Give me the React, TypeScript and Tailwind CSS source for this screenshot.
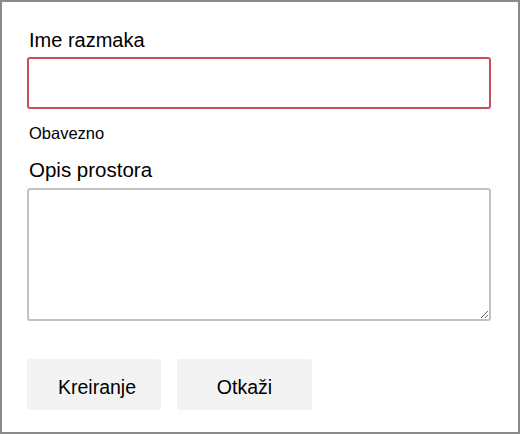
export default function App() {
  return (
    <main
      className="w-[520px] h-[434px] border-2 border-[#8a8a8a] bg-white pl-[25px] pt-[26px] flex flex-col text-black"
      style={{ fontFamily: '"Liberation Sans", Arial, sans-serif' }}
    >
      <label htmlFor="space-name" className="text-[20px] leading-[24px] pl-[2px]">
        Ime razmaka
      </label>
      <input
        id="space-name"
        type="text"
        className="mt-[5px] w-[464px] h-[52px] border-2 border-[#c8505a] rounded-[3px] px-2 text-[18px] outline-none"
      />
      <div className="mt-[14px] text-[16.5px] leading-[20px] pl-[2px]">Obavezno</div>
      <label htmlFor="space-desc" className="mt-[15px] text-[20.5px] leading-[24px] pl-[2px]">
        Opis prostora
      </label>
      <textarea
        id="space-desc"
        className="mt-[6px] w-[464px] h-[133px] border-2 border-[#c2c2c2] rounded-[3px] px-2 py-1 text-[18px] outline-none"
      />
      <div className="mt-[38px] flex gap-4">
        <button className="w-[134px] h-[51px] bg-[#f3f3f3] rounded-[3px] pt-[6px] pl-[6px] text-[19.5px]">Kreiranje</button>
        <button className="w-[135px] h-[51px] bg-[#f3f3f3] rounded-[3px] pt-[6px] text-[19.5px]">Otkaži</button>
      </div>
    </main>
  )
}
